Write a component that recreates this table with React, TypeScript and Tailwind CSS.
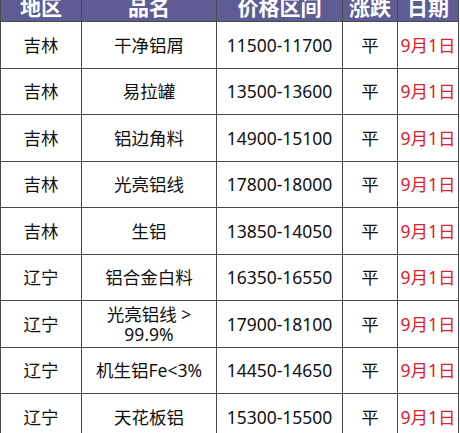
import React from 'react';

type Row = { area: string; name: React.ReactNode; price: string; trend: string; date: string };

const rows: Row[] = [
  { area: '吉林', name: '干净铝屑', price: '11500-11700', trend: '平', date: '9月1日' },
  { area: '吉林', name: '易拉罐', price: '13500-13600', trend: '平', date: '9月1日' },
  { area: '吉林', name: '铝边角料', price: '14900-15100', trend: '平', date: '9月1日' },
  { area: '吉林', name: '光亮铝线', price: '17800-18000', trend: '平', date: '9月1日' },
  { area: '吉林', name: '生铝', price: '13850-14050', trend: '平', date: '9月1日' },
  { area: '辽宁', name: '铝合金白料', price: '16350-16550', trend: '平', date: '9月1日' },
  { area: '辽宁', name: '光亮铝线 > 99.9%', price: '17900-18100', trend: '平', date: '9月1日' },
  { area: '辽宁', name: '机生铝Fe<3%', price: '14450-14650', trend: '平', date: '9月1日' },
  { area: '辽宁', name: '天花板铝', price: '15300-15500', trend: '平', date: '9月1日' },
];

const headers = ['地区', '品名', '价格区间', '涨跌', '日期'];

const cols = 'grid grid-cols-[81px_135px_126px_55px_61px]';
const cell = 'flex items-center justify-center text-center border-r border-b border-[#4a4a4a] px-1 box-border';

export default function App() {
  return (
    <div
      className="w-[460px] h-[433px] overflow-hidden bg-white"
      style={{ fontFamily: '"Noto Sans", "Noto Sans CJK SC", sans-serif' }}
    >
      <div className="w-[459px] mt-[-7px] border-l border-[#4a4a4a]">
        <div className={`${cols} h-[29px] bg-[#5e5b95]`}>
          {headers.map((h) => (
            <div key={h} className={`${cell} px-0 whitespace-nowrap text-white font-bold text-[21px] leading-none border-[#3a3a5a]`}>
              {h}
            </div>
          ))}
        </div>
        {rows.map((r, i) => (
          <div key={i} className={`${cols} h-[46.5px] text-[17.5px] leading-[20px] text-[#111]`}>
            <div className={cell}>{r.area}</div>
            <div className={cell}>{r.name}</div>
            <div className={`${cell} px-0 whitespace-nowrap`}>{r.price}</div>
            <div className={cell}>{r.trend}</div>
            <div className={`${cell} px-0 whitespace-nowrap text-[#e0202a]`}>{r.date}</div>
          </div>
        ))}
      </div>
    </div>
  );
}
